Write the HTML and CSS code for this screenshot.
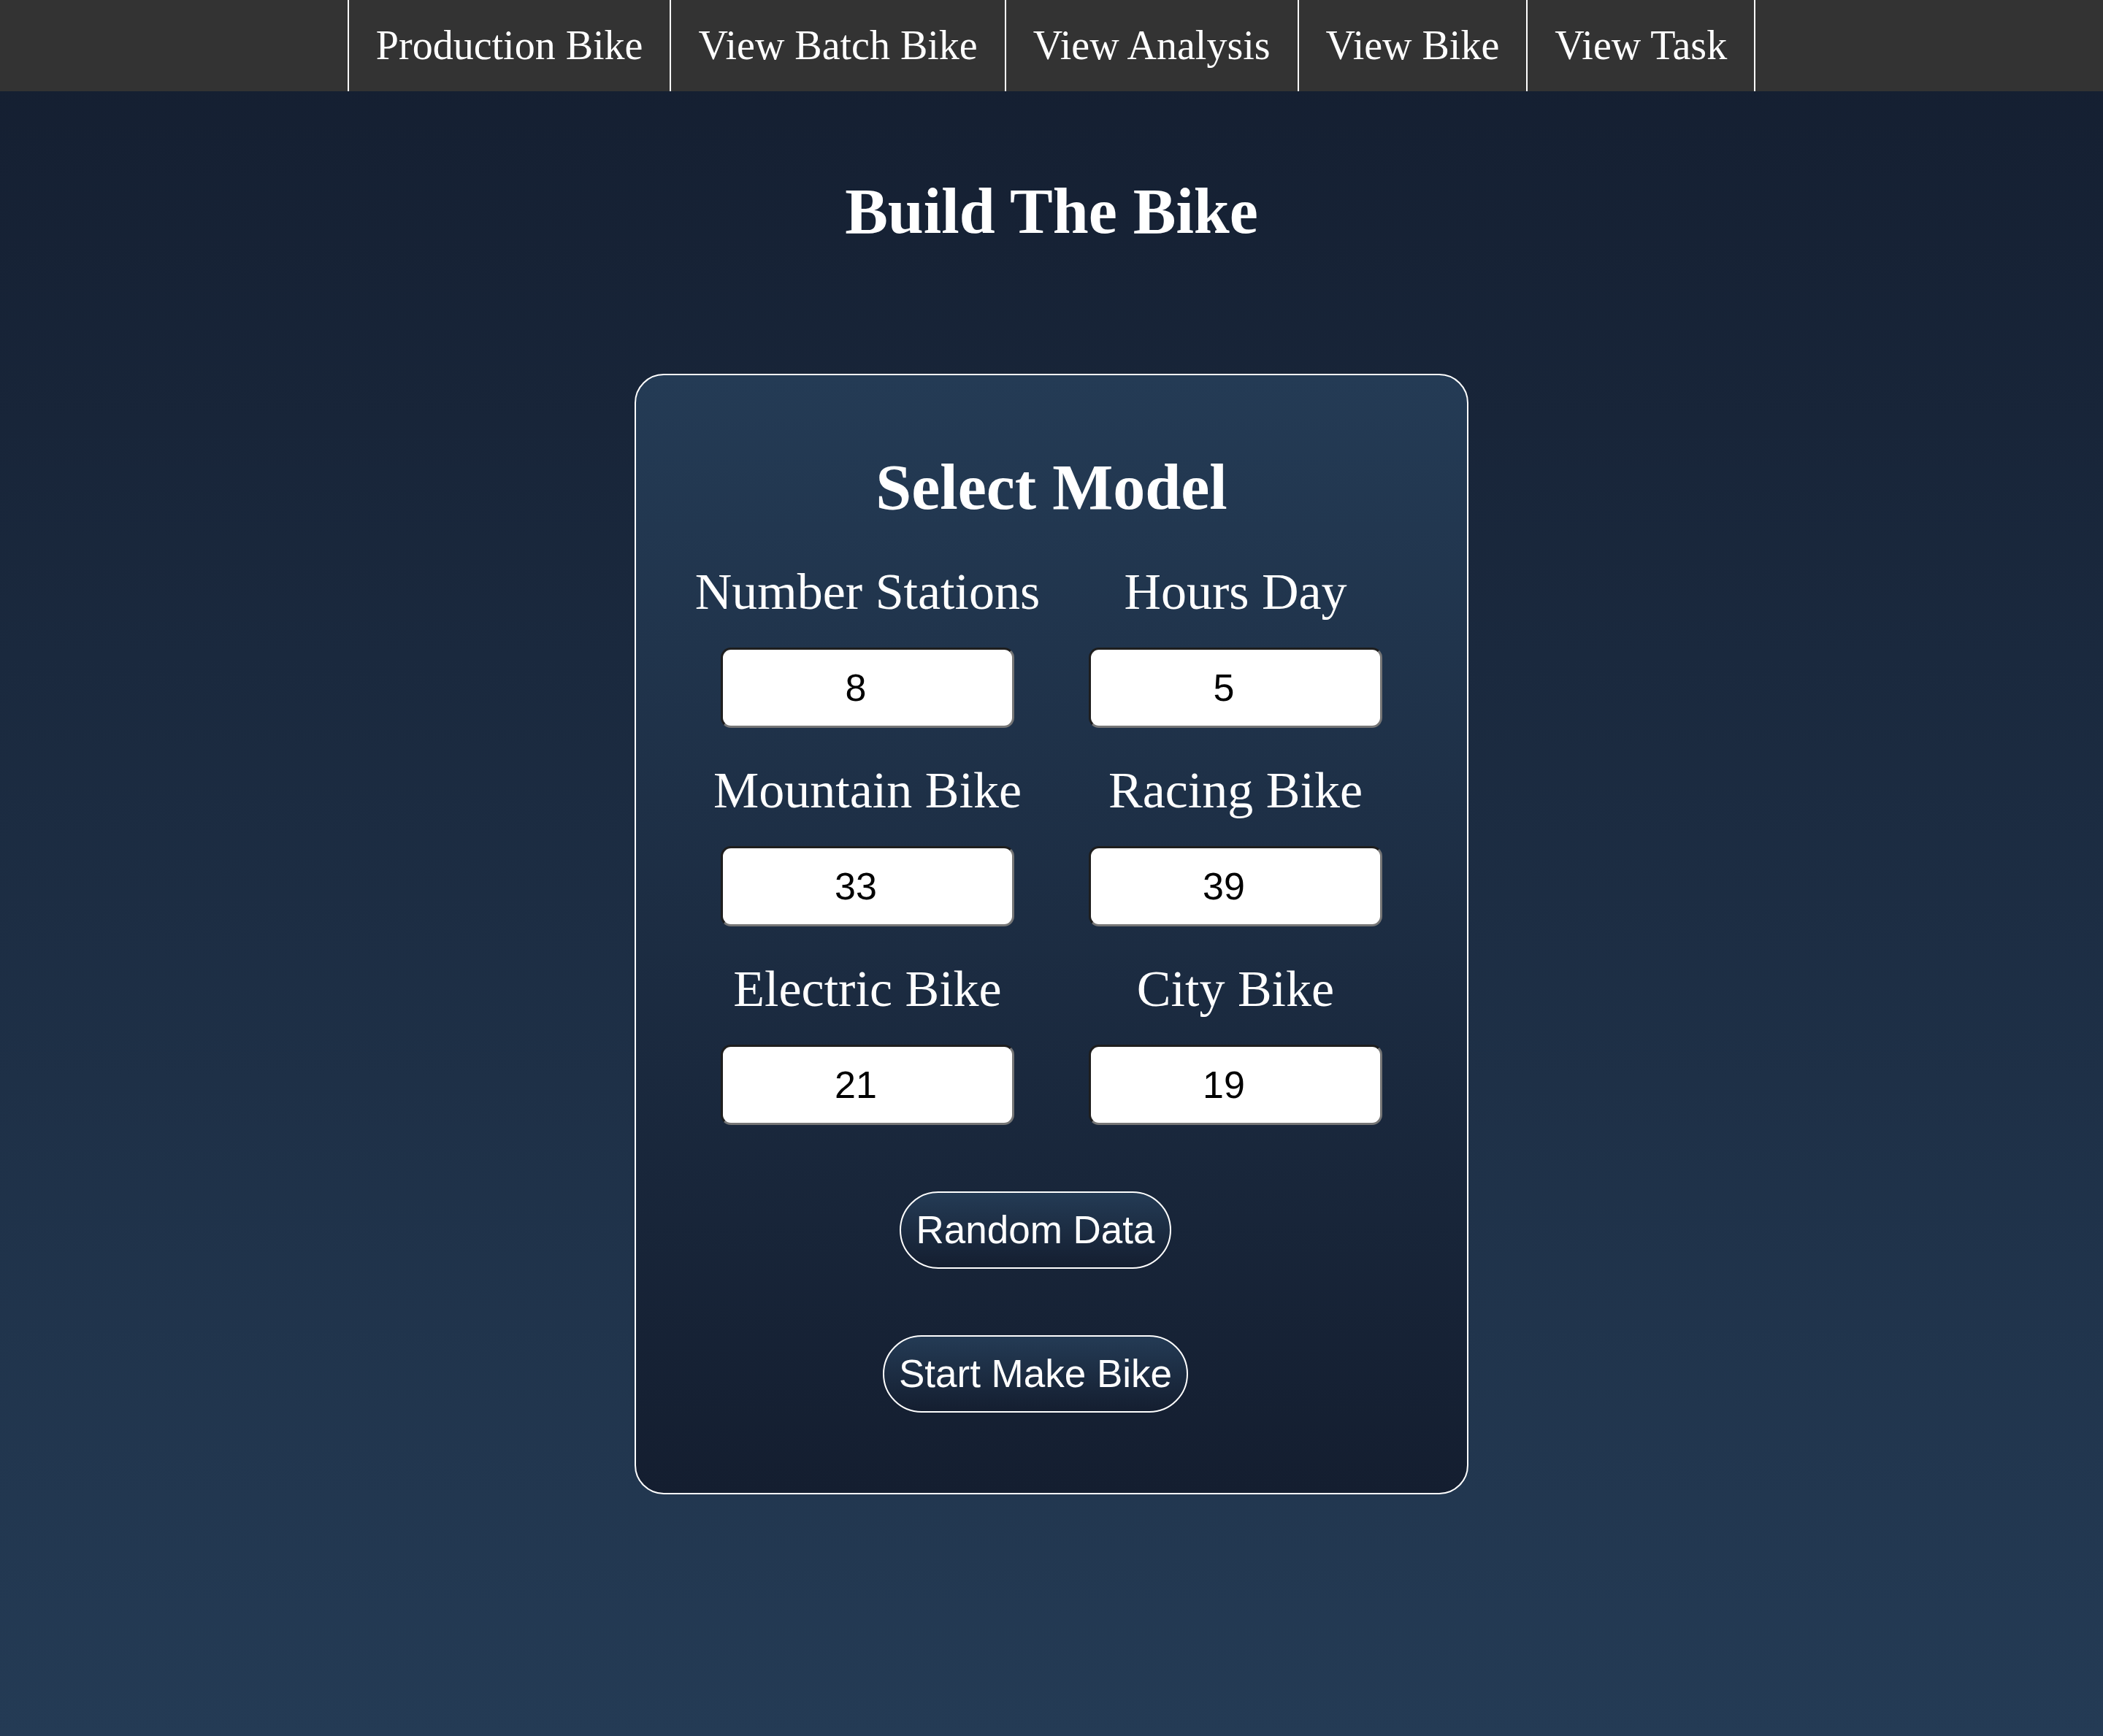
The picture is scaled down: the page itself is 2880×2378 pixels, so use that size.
FILE: index.html
```html
<!DOCTYPE html>
<html lang="en">
<head>
<meta charset="utf-8">
<title>Build The Bike</title>
<link rel="stylesheet" href="styles.css">
</head>
<body>
<nav class="topnav">
  <ul class="topnav-list">
    <li class="topnav-item"><a href="#">Production Bike</a></li>
    <li class="topnav-item"><a href="#">View Batch Bike</a></li>
    <li class="topnav-item"><a href="#">View Analysis</a></li>
    <li class="topnav-item"><a href="#">View Bike</a></li>
    <li class="topnav-item"><a href="#">View Task</a></li>
  </ul>
</nav>
<main class="page">
  <h1 class="page-title">Build The Bike</h1>
  <section class="card">
    <h2 class="card-title">Select Model</h2>
    <div class="fields">
      <div class="field"><label class="field-label">Number Stations</label><input class="field-input" type="text" value="8"></div>
      <div class="field"><label class="field-label">Hours Day</label><input class="field-input" type="text" value="5"></div>
      <div class="field"><label class="field-label">Mountain Bike</label><input class="field-input" type="text" value="33"></div>
      <div class="field"><label class="field-label">Racing Bike</label><input class="field-input" type="text" value="39"></div>
      <div class="field"><label class="field-label">Electric Bike</label><input class="field-input" type="text" value="21"></div>
      <div class="field"><label class="field-label">City Bike</label><input class="field-input" type="text" value="19"></div>
    </div>
    <div class="actions">
      <button class="btn" type="button">Random Data</button>
      <button class="btn" type="button">Start Make Bike</button>
    </div>
  </section>
</main>
</body>
</html>
```

FILE: styles.css
```css
html, body {
  margin: 0;
  padding: 0;
}
body {
  min-height: 100vh;
  background: linear-gradient(to bottom, #141e30, #243b55);
  font-family: "Liberation Serif", "Times New Roman", serif;
  color: #fff;
}
.topnav {
  background: #333333;
  height: 125px;
}
.topnav-list {
  list-style: none;
  margin: 0;
  padding: 0;
  display: flex;
  justify-content: center;
  height: 125px;
}
.topnav-item {
  border-right: 2px solid #ffffff;
}
.topnav-item:first-child {
  border-left: 2px solid #ffffff;
}
.topnav-item a {
  display: block;
  padding: 30px 37px;
  line-height: 65px;
  font-size: 56px;
  color: #ffffff;
  text-decoration: none;
}
.page {
  display: flex;
  flex-direction: column;
  align-items: center;
  padding-bottom: 40px;
}
.page-title {
  margin: 115px 0 0;
  font-size: 88px;
  line-height: 100px;
  font-weight: bold;
  text-align: center;
}
.card {
  margin-top: 172px;
  width: 1138px;
  border: 2px solid #ffffff;
  border-radius: 40px;
  background: linear-gradient(to bottom, #243b55, #141e30);
  padding: 104px 0 110px;
  display: flex;
  flex-direction: column;
  align-items: center;
}
.card-title {
  margin: 0;
  font-size: 88px;
  line-height: 100px;
  font-weight: bold;
  text-align: center;
}
.fields {
  margin-top: 53px;
  display: grid;
  grid-template-columns: 504px 504px;
  row-gap: 46px;
}
.field {
  display: flex;
  flex-direction: column;
  align-items: center;
}
.field-label {
  font-size: 70px;
  line-height: 80px;
  white-space: nowrap;
}
.field-input {
  margin-top: 36px;
  box-sizing: border-box;
  width: 402px;
  height: 110px;
  border-width: 3px;
  border-style: solid;
  border-color: #1e1e1e #767676 #767676 #1e1e1e;
  border-radius: 14px;
  background: #ffffff;
  color: #000000;
  font-family: "Liberation Sans", Arial, sans-serif;
  font-size: 52px;
  line-height: 62px;
  padding: 0 32px 0 0;
  text-align: center;
}
.actions {
  margin-top: 91px;
  display: flex;
  flex-direction: column;
  align-items: center;
  gap: 91px;
  padding-right: 44px;
}
.btn {
  box-sizing: border-box;
  height: 106px;
  padding: 20px 20px;
  border: 2px solid #ffffff;
  border-radius: 53px;
  background: linear-gradient(to bottom, #243b55, #141e30);
  color: #ffffff;
  font-family: "Liberation Sans", Arial, sans-serif;
  font-size: 53px;
  line-height: 62px;
}
```
